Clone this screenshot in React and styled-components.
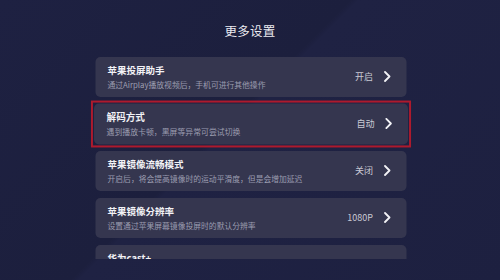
import React from 'react'
import styled, { createGlobalStyle, css } from 'styled-components'

const GlobalStyle = createGlobalStyle`
    html, body {
        margin: 0;
        padding: 0;
        background: #1d2040;
    }
    body {
        font-family: "Noto Sans CJK SC", "Noto Sans", sans-serif;
    }
`

const items = [
    { title: '苹果投屏助手', desc: '通过Airplay播放视频后，手机可进行其他操作', value: '开启' },
    { title: '解码方式', desc: '遇到播放卡顿，黑屏等异常可尝试切换', value: '自动', focused: true },
    { title: '苹果镜像流畅模式', desc: '开启后，将会提高镜像时的运动平滑度，但是会增加延迟', value: '关闭' },
    { title: '苹果镜像分辨率', desc: '设置通过苹果屏幕镜像投屏时的默认分辨率', value: '1080P' },
    { title: '华为cast+', desc: '华为手机投屏设置', value: '' },
]

const Chevron = () => (
    <svg width="8" height="11" viewBox="0 0 8 11">
        <path d="M1.5 1 L6 5.5 L1.5 10" fill="none" stroke="#f2f2f6" strokeWidth="1.8" strokeLinecap="round" strokeLinejoin="round" />
    </svg>
)

const App = () => {
    return (
        <Screen>
            <GlobalStyle />
            <Title>更多设置</Title>
            <List>
                {items.map((item) => (
                    <Card key={item.title} $focused={item.focused}>
                        <Texts>
                            <ItemTitle>{item.title}</ItemTitle>
                            <ItemDesc>{item.desc}</ItemDesc>
                        </Texts>
                        <Side>
                            <Value>{item.value}</Value>
                            <Chevron />
                        </Side>
                    </Card>
                ))}
            </List>
        </Screen>
    )
}

const Screen = styled.div`
    width: 500px;
    height: 280px;
    overflow: hidden;
    background: linear-gradient(135deg, #1e2142 0%, #1c1f3d 45%, #1f2243 46%, #1d2040 100%);
    display: flex;
    flex-direction: column;
    align-items: center;
    box-sizing: border-box;
    padding-top: 21px;
`

const Title = styled.div`
    color: #ececf2;
    font-size: 12.5px;
    line-height: 20px;
    height: 20px;
    letter-spacing: 0.3px;
`

const List = styled.div`
    margin-top: 12px;
    width: 311px;
    height: 198px;
    padding: 4px 5px;
    overflow: hidden;
    display: flex;
    flex-direction: column;
    gap: 7.5px;
    transform: translateX(0.5px);
`

const focusRing = css`
    transform: scale(1.01, 1.02);
    &::after {
        content: '';
        position: absolute;
        inset: -3px -3px -3px -3.5px;
        border: 2px solid #ad1a2d;
        pointer-events: none;
    }
`

const Card = styled.div`
    position: relative;
    flex: 0 0 39.5px;
    box-sizing: border-box;
    background: #35364f;
    border-radius: 5px;
    display: flex;
    align-items: center;
    justify-content: space-between;
    padding: 0 15px 0 12.5px;
    ${({ $focused }) => $focused && focusRing}
`

const Texts = styled.div`
    display: flex;
    flex-direction: column;
    gap: 2px;
`

const ItemTitle = styled.div`
    color: #f2f2f6;
    font-size: 9.5px;
    font-weight: 700;
    line-height: 13px;
`

const ItemDesc = styled.div`
    color: #9c9db0;
    font-size: 7.8px;
    line-height: 11px;
`

const Side = styled.div`
    display: flex;
    align-items: center;
    gap: 10px;
`

const Value = styled.span`
    color: #c9c9d4;
    font-size: 9px;
`

export default App
